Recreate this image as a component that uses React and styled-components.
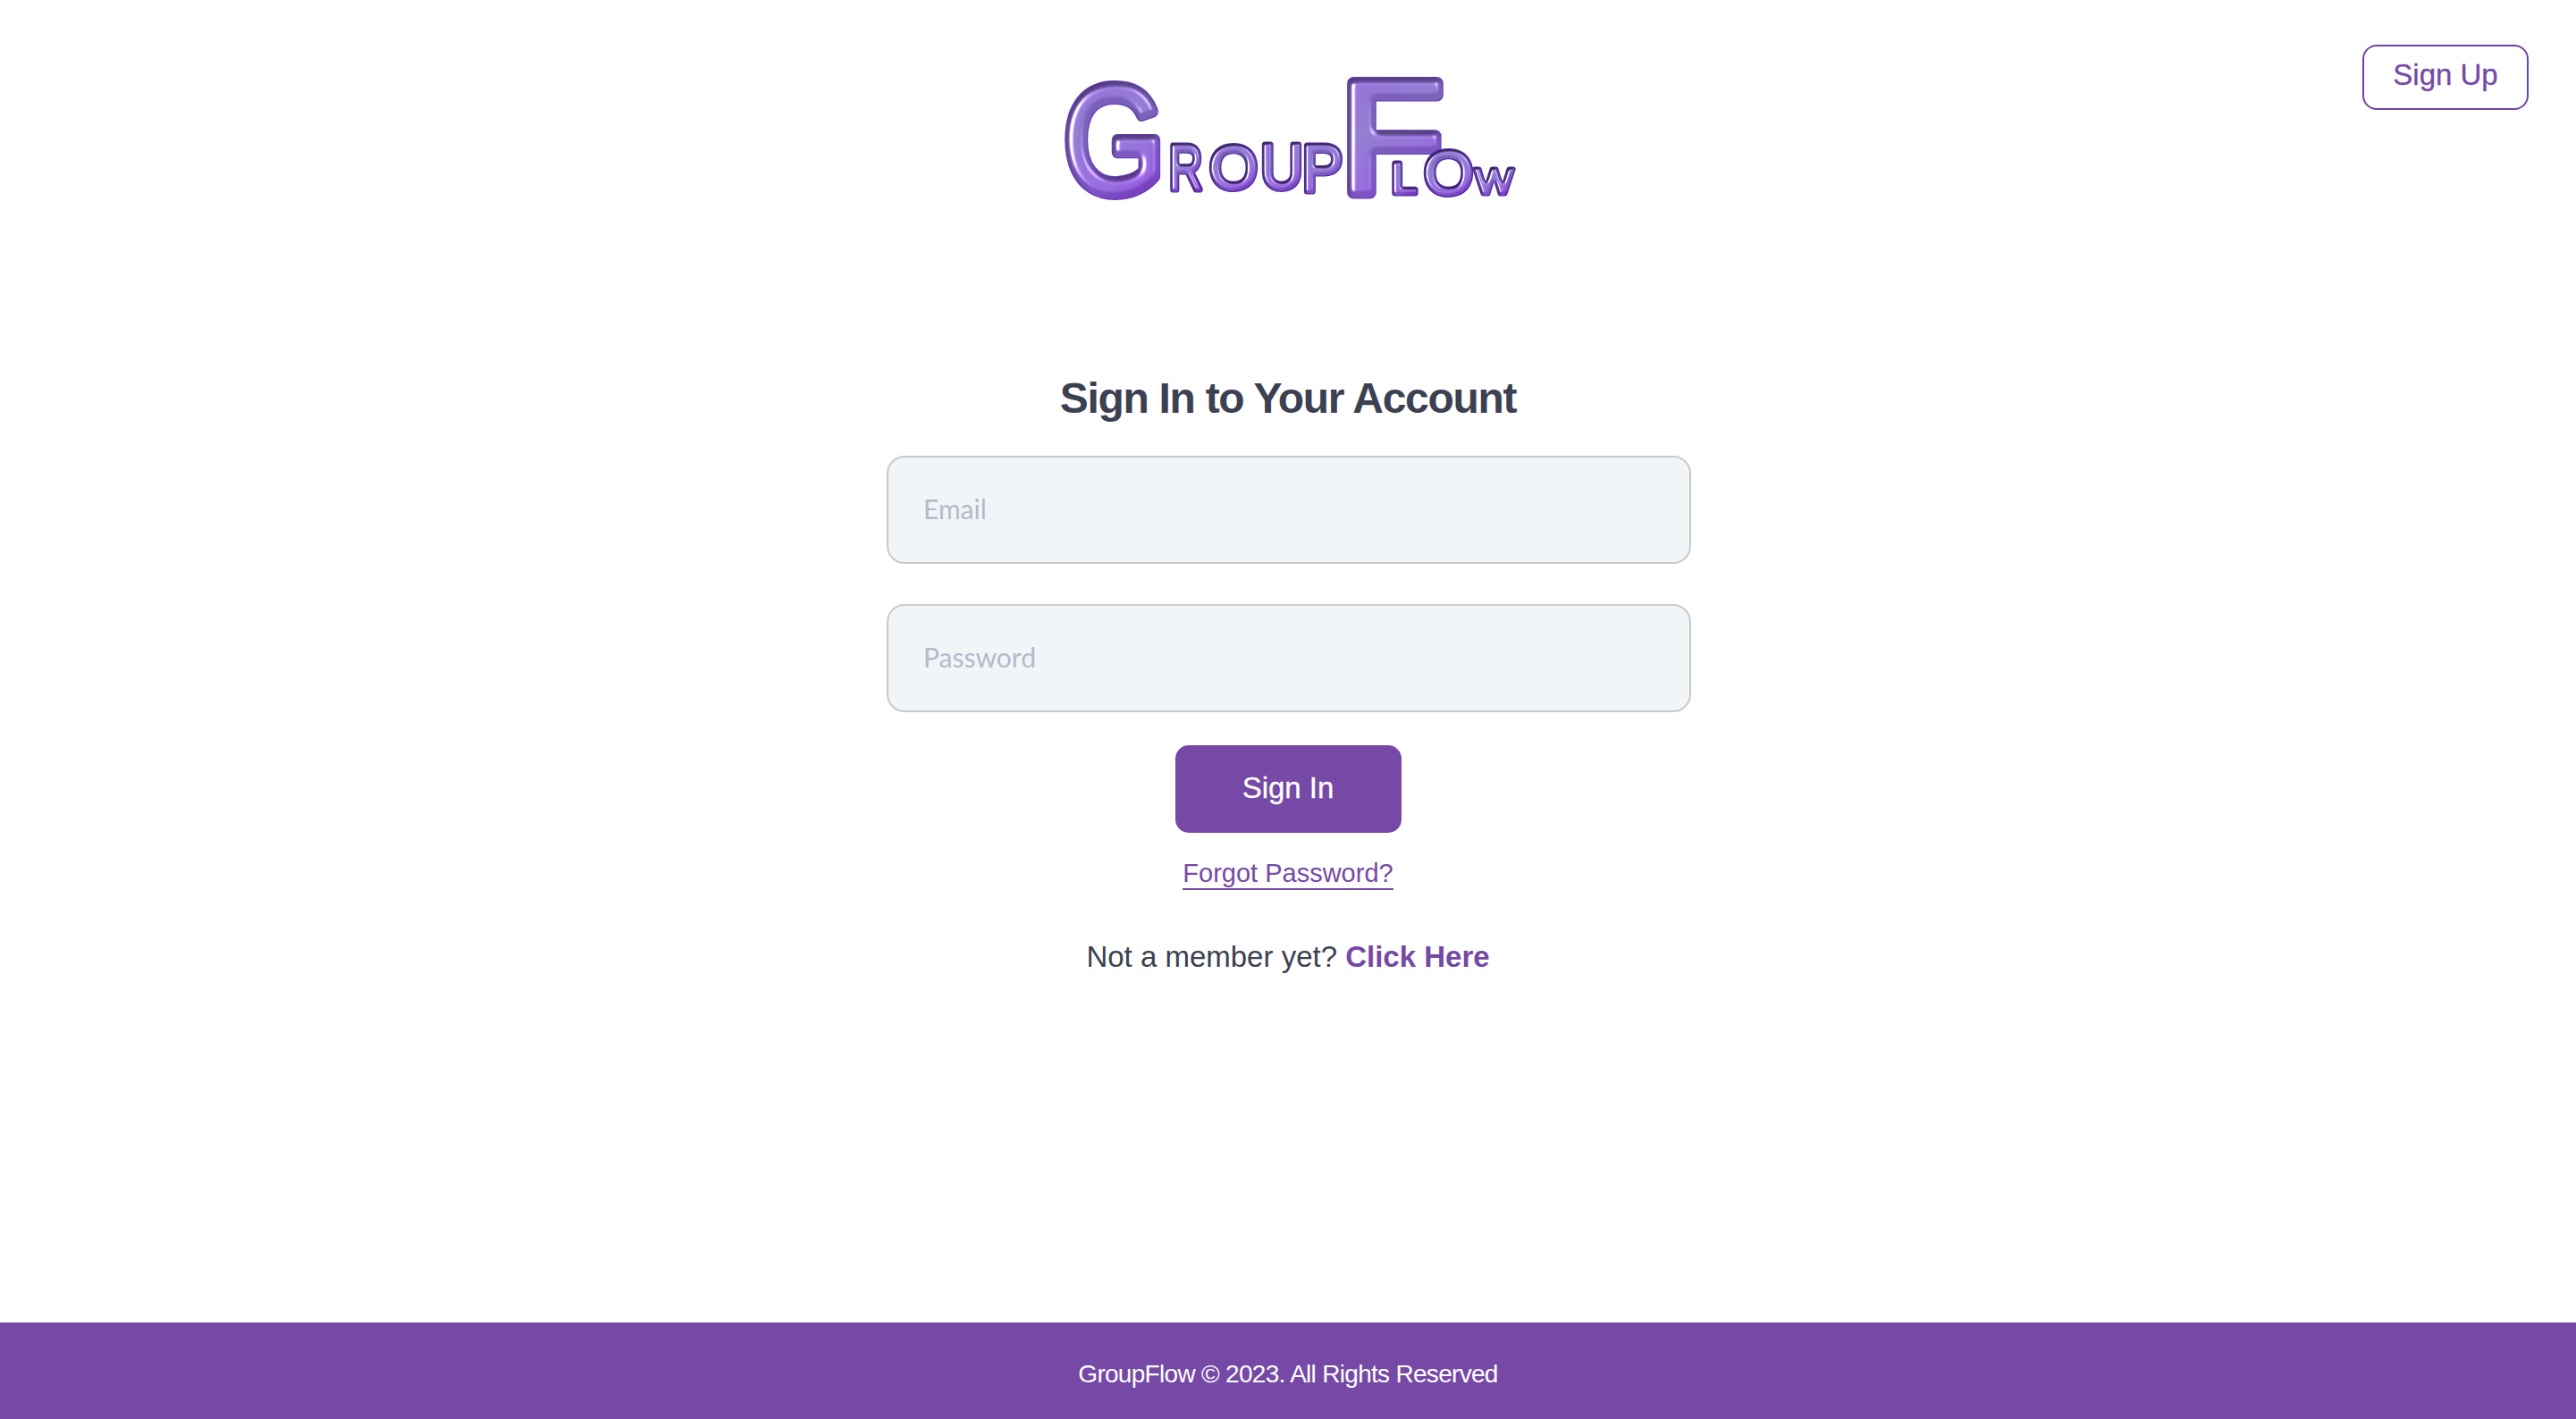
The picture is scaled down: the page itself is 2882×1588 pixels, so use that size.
import React from "react";
import styled, { createGlobalStyle } from "styled-components";

const Global = createGlobalStyle`
  html, body { margin: 0; padding: 0; background: #fff; }
  body { font-family: "Liberation Sans", Arial, sans-serif; }
  * { box-sizing: border-box; }
`;
const Page = styled.div`
  min-height: 1588px; display: flex; flex-direction: column; background: #fff;
`;
const Header = styled.header`
  display: grid; grid-template-columns: 1fr auto 1fr; align-items: start;
  padding-top: 50px; height: 250px;
`;
const SignUpLink = styled.a`
  grid-column: 3; justify-self: end; margin-right: 53px;
  width: 186px; height: 73px; display: flex; align-items: center; justify-content: center;
  border: 2px solid #7044a6; border-radius: 16px; color: #7549a5;
  font-size: 33px; line-height: 1; padding-bottom: 6px;
  -webkit-text-stroke: 0.3px #7549a5;
`;
const LogoSvg = styled.svg`
  grid-column: 2; display: block; width: 522px; height: 190px;
`;
const Main = styled.main`
  display: flex; flex-direction: column; align-items: center; padding-top: 166px;
`;
const Title = styled.h1`
  margin: 0 0 34px; height: 60px; font-size: 48px; line-height: 60px; font-weight: 700;
  letter-spacing: -1.3px; color: #3c4152;
`;
const Form = styled.form`
  display: flex; flex-direction: column; align-items: center; width: 900px;
`;
const Field = styled.input`
  align-self: flex-start; flex: none; width: 900px; height: 121px; margin: 0 0 ${p => p.$gap}px 1px;
  padding: 0 38px 3px 39px;
  background: #f2f5f8; border: 2px solid #c9cacc; border-radius: 20px; outline: none;
  font-family: "Lato", sans-serif; font-size: 30px;
  &::placeholder { color: #b6b9c8; opacity: 1; }
`;
const SubmitButton = styled.button`
  width: 253px; height: 98px; border: 0; border-radius: 15px; background: #7549a5; color: #fff;
  font-family: "Liberation Sans", Arial, sans-serif; font-size: 33px; padding: 0 0 3px;
  -webkit-text-stroke: 0.3px #fff;
`;
const Forgot = styled.a`
  margin-top: 27px; color: #7549a5; font-size: 29px; line-height: 36px;
  border-bottom: 2px solid #7549a5; height: 37px;
`;
const Member = styled.p`
  margin: 55px 0 0; font-size: 33px; line-height: 40px; color: #3c4152;
`;
const MemberLink = styled.a`
  color: #7549a5; font-weight: 700;
`;
const Footer = styled.footer`
  margin-top: auto; height: 108px; background: #7549a5; color: #fff;
  display: flex; align-items: center; justify-content: center;
  font-size: 28px; letter-spacing: -0.7px; padding-top: 8px;
`;

const letters = [
  { ch: "G", x: 10, w: 113, y: 135, size: 168, sw: 14, f: "big" },
  { ch: "R", x: 127.5, w: 38, y: 131.5, size: 70, sw: 7, f: "small" },
  { ch: "O", x: 173, w: 54, y: 131, size: 69, sw: 7, f: "small" },
  { ch: "U", x: 230, w: 48, y: 131, size: 70, sw: 7, f: "small" },
  { ch: "P", x: 276.5, w: 46, y: 133.5, size: 74, sw: 7, f: "small" },
  { ch: "F", x: 319, w: 116, y: 136, size: 178, sw: 14, f: "big" },
  { ch: "L", x: 376.7, w: 28, y: 135.5, size: 49, sw: 7, f: "small" },
  { ch: "O", x: 413, w: 55, y: 137, size: 69, sw: 7, f: "small" },
  { ch: "W", x: 470, w: 43, y: 136.5, size: 40, sw: 5, f: "small" },
];

const Balloon = ({ id, blur, scale, shade, rim }) => (
  <filter id={id} x="-15%" y="-15%" width="130%" height="130%" colorInterpolationFilters="sRGB">
    <feMorphology in="SourceAlpha" operator="erode" radius="0.7" result="core" />
    <feFlood floodColor={rim} />
    <feComposite in2="SourceAlpha" operator="in" result="rim" />
    <feGaussianBlur in="core" stdDeviation={blur} result="blur" />
    <feDiffuseLighting in="blur" surfaceScale={shade} diffuseConstant="1.1" lightingColor="#ffffff" result="diff">
      <feDistantLight azimuth="60" elevation="64" />
    </feDiffuseLighting>
    <feComposite in="SourceGraphic" in2="diff" operator="arithmetic" k1="1" k2="0" k3="0" k4="0" result="shaded" />
    <feSpecularLighting in="blur" surfaceScale={scale} specularConstant="1.0" specularExponent="28" lightingColor="#ffffff" result="specA">
      <feDistantLight azimuth="190" elevation="42" />
    </feSpecularLighting>
    <feSpecularLighting in="blur" surfaceScale={scale} specularConstant="0.5" specularExponent="28" lightingColor="#e9dcff" result="specB">
      <feDistantLight azimuth="320" elevation="40" />
    </feSpecularLighting>
    <feComposite in="shaded" in2="specA" operator="arithmetic" k1="0" k2="1" k3="1" k4="0" result="litA" />
    <feComposite in="litA" in2="specB" operator="arithmetic" k1="0" k2="1" k3="1" k4="0" result="lit" />
    <feComposite in="lit" in2="core" operator="in" result="body" />
    <feMerge>
      <feMergeNode in="rim" />
      <feMergeNode in="body" />
    </feMerge>
  </filter>
);

const Logo = () => (
  <LogoSvg viewBox="0 -30 522 190" role="img" aria-label="GroupFlow">
    <defs>
      <linearGradient id="chrome" x1="0" y1="0" x2="0.3" y2="1">
        <stop offset="0" stopColor="#7e52c4" />
        <stop offset="0.5" stopColor="#7a64b8" />
        <stop offset="0.85" stopColor="#7f50c6" />
        <stop offset="1" stopColor="#7538bc" />
      </linearGradient>
      <Balloon id="big" blur="3.6" scale="7" shade="2.5" rim="#6a3cb4" />
      <Balloon id="small" blur="1.4" scale="3" shade="2" rim="#4f28a4" />
    </defs>
    <g fontFamily="'Liberation Sans', Arial, sans-serif" fontWeight="400" strokeLinejoin="round" strokeLinecap="round" fill="url(#chrome)" stroke="url(#chrome)">
      {letters.map((l, i) => (
        <text key={i} x={l.x} y={l.y} fontSize={l.size} strokeWidth={l.sw} textLength={l.w} lengthAdjust="spacingAndGlyphs" filter={`url(#${l.f})`}>{l.ch}</text>
      ))}
    </g>
  </LogoSvg>
);

export default function App() {
  return (
    <Page>
      <Global />
      <Header>
        <Logo />
        <SignUpLink>Sign Up</SignUpLink>
      </Header>
      <Main>
        <Title>Sign In to Your Account</Title>
        <Form onSubmit={e => e.preventDefault()}>
          <Field type="email" placeholder="Email" $gap={45} />
          <Field type="password" placeholder="Password" $gap={37} />
          <SubmitButton type="submit">Sign In</SubmitButton>
          <Forgot>Forgot Password?</Forgot>
          <Member>Not a member yet? <MemberLink>Click Here</MemberLink></Member>
        </Form>
      </Main>
      <Footer>GroupFlow © 2023. All Rights Reserved</Footer>
    </Page>
  );
}
